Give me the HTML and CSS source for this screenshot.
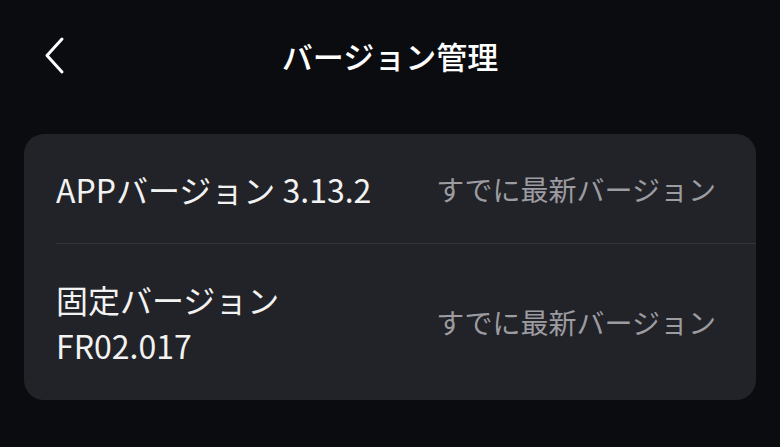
FILE: index.html
```html
<!DOCTYPE html>
<html lang="ja">
<head>
<meta charset="utf-8">
<link rel="stylesheet" href="styles.css">
</head>
<body>
<header class="topbar">
  <button class="back" aria-label="戻る">
    <svg width="30" height="40" viewBox="0 0 30 40"><path d="M21 4 L6 20.5 L21 37" fill="none" stroke="#fff" stroke-width="3" stroke-linecap="round" stroke-linejoin="round"/></svg>
  </button>
  <h1 class="title">バージョン管理</h1>
</header>
<section class="card">
  <div class="row row-first">
    <div class="label">APPバージョン 3.13.2</div>
    <div class="status">すでに最新バージョン</div>
  </div>
  <div class="row row-second">
    <div class="label multi">固定バージョン<br>FR02.017</div>
    <div class="status">すでに最新バージョン</div>
  </div>
</section>
</body>
</html>
```
FILE: styles.css
```css
* { box-sizing: border-box; }
html, body {
  margin: 0;
  padding: 0;
  background: #0b0c10;
  width: 780px;
  height: 447px;
  overflow: hidden;
  font-family: "Noto Sans CJK JP", "Noto Sans", sans-serif;
  color: #f2f2f2;
}
.topbar {
  position: relative;
  height: 110px;
  display: flex;
  align-items: center;
  justify-content: center;
}
.back {
  position: absolute;
  left: 41px;
  top: 35px;
  background: none;
  border: 0;
  padding: 0;
  width: 30px;
  height: 40px;
}
.back svg { display: block; }
.title {
  margin: 0;
  font-size: 31px;
  font-weight: 500;
  color: #ffffff;
  line-height: 1;
}
.card {
  margin: 24px 24px 0;
  background: #222328;
  border-radius: 20px;
  overflow: hidden;
}
.row {
  display: flex;
  align-items: center;
  justify-content: space-between;
  margin-left: 32px;
  padding-right: 40px;
}
.row-first {
  height: 110px;
  border-bottom: 1.5px solid #34353a;
}
.row-second {
  height: 156px;
}
.label {
  font-size: 32px;
  font-weight: 400;
  line-height: 46px;
  color: #f2f2f2;
}
.status {
  font-size: 28px;
  font-weight: 400;
  color: #9c9ca1;
}
```
